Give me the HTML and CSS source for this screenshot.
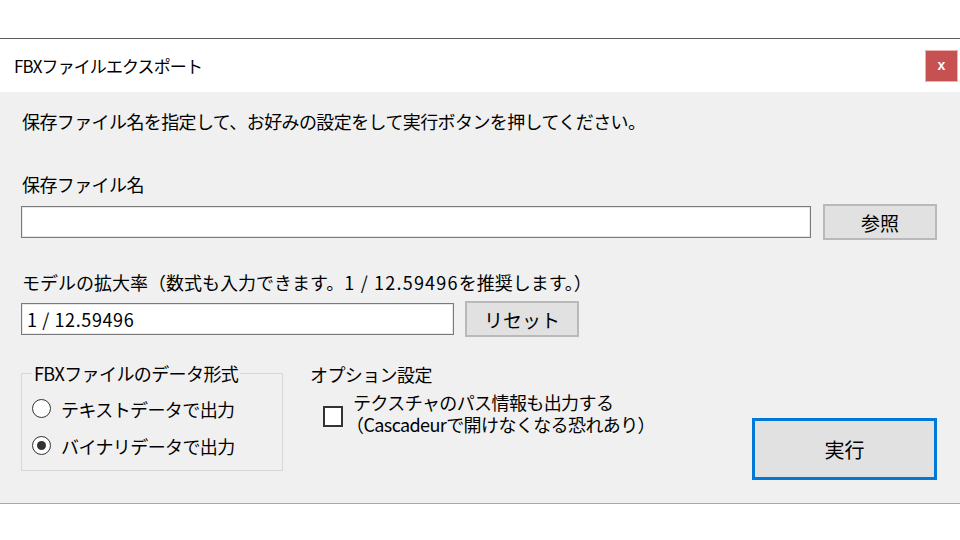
FILE: index.html
```html
<!DOCTYPE html>
<html lang="ja">
<head>
<meta charset="utf-8">
<title>FBXファイルエクスポート</title>
<link rel="stylesheet" href="styles.css">
</head>
<body>
<div class="top-space"></div>
<div class="window">
  <div class="titlebar">
    <span class="title">FBXファイルエクスポート</span>
    <span class="close">x</span>
  </div>
  <div class="client">
    <p class="text instruction">保存ファイル名を指定して、お好みの設定をして実行ボタンを押してください。</p>
    <p class="text label1">保存ファイル名</p>
    <div class="row row1">
      <div class="input input-file"></div>
      <div class="btn btn-browse">参照</div>
    </div>
    <p class="text label2">モデルの拡大率（数式も入力できます。<span class="num">1 / 12.59496</span>を推奨します。）</p>
    <div class="row row2">
      <div class="input input-scale"><span class="num">1 / 12.59496</span></div>
      <div class="btn btn-reset">リセット</div>
    </div>
    <div class="bottom">
      <fieldset class="group">
        <legend class="text">FBXファイルのデータ形式</legend>
        <div class="radio-row"><span class="radio"></span><span class="text">テキストデータで出力</span></div>
        <div class="radio-row"><span class="radio checked"></span><span class="text">バイナリデータで出力</span></div>
      </fieldset>
      <div class="options">
        <p class="text">オプション設定</p>
        <div class="check-row">
          <span class="checkbox"></span>
          <div class="check-text">
            <div class="text check-line">テクスチャのパス情報も出力する</div>
            <div class="text check-line line2">（Cascadeurで開けなくなる恐れあり）</div>
          </div>
        </div>
      </div>
      <div class="btn btn-run">実行</div>
    </div>
  </div>
</div>
</body>
</html>
```

FILE: styles.css
```css
html, body {
  margin: 0;
  padding: 0;
  background: #ffffff;
  width: 960px;
  height: 540px;
  overflow: hidden;
}
body {
  font-family: "Noto Sans CJK JP", "Noto Sans", sans-serif;
  color: #000;
}
.top-space {
  height: 38px;
}
.window {
  border-top: 1px solid #5e5e5e;
  box-shadow: 0 1px 0 #a8a8a8;
}
.titlebar {
  height: 53px;
  background: #fff;
  display: flex;
  align-items: center;
  justify-content: space-between;
}
.title {
  padding-left: 14px;
  font-size: 17px;
  line-height: 24px;
  letter-spacing: -0.9px;
}
.close {
  width: 31px;
  height: 30px;
  margin-right: 2px;
  background: #c75050;
  border: 1px solid #e6b2b2;
  color: #fff;
  font-family: "Liberation Sans", Arial, sans-serif;
  font-weight: bold;
  font-size: 14px;
  line-height: 28px;
  text-align: center;
}
.client {
  background: #f0f0f0;
  height: 411px;
  padding: 0 23px 0 21px;
  box-sizing: border-box;
  overflow: hidden;
  display: flex;
  flex-direction: column;
}
.text {
  font-size: 18px;
  line-height: 24px;
  letter-spacing: -0.6px;
  margin: 0;
  white-space: nowrap;
}
.num {
  letter-spacing: 0.6px;
}
.instruction {
  margin-top: 17px;
  padding-left: 1px;
}
.label1 {
  margin-top: 39px;
  padding-left: 1px;
}
.label2 {
  margin-top: 30px;
  padding-left: 1px;
  letter-spacing: 0;
}
.label2 .num {
  letter-spacing: 1.2px;
}
.row {
  display: flex;
  align-items: center;
}
.row1 {
  margin-top: 8px;
  gap: 12px;
}
.row2 {
  margin-top: 7px;
  gap: 11px;
}
.input {
  background: #fff;
  border: 1px solid #7a7a7a;
  box-shadow: inset 0 0 0 1px #e8e8e8;
  height: 32px;
  box-sizing: border-box;
  font-size: 18px;
  line-height: 30px;
  padding-left: 5px;
}
.input-file {
  width: 790px;
}
.input-scale {
  width: 433px;
}
.btn {
  background: #e1e1e1;
  border: 2px solid #b9b9b9;
  box-sizing: border-box;
  height: 36px;
  display: flex;
  align-items: center;
  justify-content: center;
  font-size: 19px;
  letter-spacing: 0;
}
.btn-browse {
  width: 114px;
}
.btn-reset {
  width: 114px;
}
.bottom {
  margin-top: 24px;
  display: flex;
  align-items: flex-start;
}
.group {
  margin: 0;
  width: 262px;
  box-sizing: border-box;
  border: 1px solid #d7d7d7;
  padding: 5px 10px 6px 10px;
}
.group legend {
  padding: 0 2px;
}
.radio-row {
  height: 37px;
  display: flex;
  align-items: center;
}
.radio {
  width: 19px;
  height: 19px;
  box-sizing: border-box;
  border: 1.5px solid #333;
  border-radius: 50%;
  background: #fff;
  margin-right: 10px;
  display: flex;
  align-items: center;
  justify-content: center;
}
.radio.checked::after {
  content: "";
  width: 9px;
  height: 9px;
  border-radius: 50%;
  background: #333;
}
.options {
  margin-left: 27px;
  padding-top: 1px;
}
.check-row {
  display: flex;
  align-items: flex-start;
  margin-top: 5px;
  margin-left: 13px;
}
.checkbox {
  width: 20px;
  height: 21px;
  box-sizing: border-box;
  border: 2px solid #333;
  background: #fff;
  margin-top: 15px;
  margin-right: 10px;
  flex: none;
}
.check-line {
  height: 22px;
  line-height: 22px;
}
.line2 {
  margin-left: -7px;
}
.btn-run {
  margin-left: auto;
  margin-top: 57px;
  width: 185px;
  height: 62px;
  border: 3px solid #0078d7;
  font-size: 20px;
}
```
